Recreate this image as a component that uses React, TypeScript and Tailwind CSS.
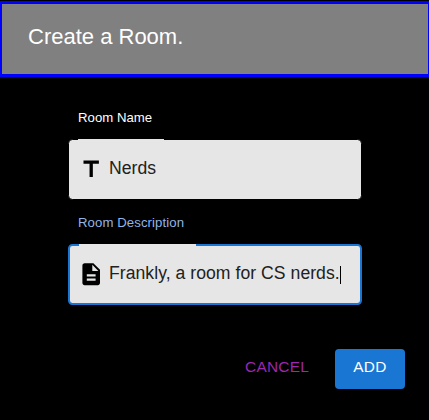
import type { ReactNode } from "react";

function Glyph({ d }: { d: string }) {
  return (
    <svg viewBox="0 0 24 24" className="size-[26.4px] shrink-0 fill-black">
      <path d={d} />
    </svg>
  );
}

const TITLE = "M5 4v3h5.5v12h3V7H19V4z";
const DESCRIPTION =
  "M14 2H6c-1.1 0-1.99.9-1.99 2L4 20c0 1.1.89 2 1.99 2H18c1.1 0 2-.9 2-2V8l-6-6zm2 16H8v-2h8v2zm0-4H8v-2h8v2zm-3-5V3.5L18.5 9H13z";

function Field({
  label,
  labelClass,
  boxClass,
  notchClass,
  children,
}: {
  label: string;
  labelClass: string;
  boxClass: string;
  notchClass: string;
  children: ReactNode;
}) {
  return (
    <div className="h-[105px]">
      <div className={`ml-[10px] h-[29px] text-[13.2px] leading-[16px] ${labelClass}`}>{label}</div>
      <div className={`relative flex h-[61px] w-[294px] items-center rounded-[4.4px] bg-[#e6e6e6] ${boxClass}`}>
        <span className={`absolute bg-[#e6e6e6] ${notchClass}`} />
        {children}
      </div>
    </div>
  );
}

export default function App() {
  return (
    <div className="h-[420px] w-[429px] overflow-hidden bg-black pt-px font-['Liberation_Sans',Arial,sans-serif]">
      <header className="h-[76px] border-y-[3px] border-r border-l-2 border-[#0000ff] bg-[#808080] pt-[17px] pl-[26px] text-[22px] leading-[32px] tracking-[0px] text-white">
        Create a Room.
      </header>
      <main className="pt-[33px] pl-[68px]">
        <Field
          label="Room Name"
          labelClass="text-white tracking-[0.02px]"
          boxClass="border border-black pl-[8.8px]"
          notchClass="left-[9px] -top-px h-px w-[86px]"
        >
          <Glyph d={TITLE} />
          <span className="ml-[4.8px] pb-[2px] text-[17.6px] tracking-[0.04px] text-[#212121]">Nerds</span>
        </Field>
        <Field
          label="Room Description"
          labelClass="text-[#90b5e8] tracking-[0.08px]"
          boxClass="border-2 border-[#1976d2] pl-[7.8px]"
          notchClass="left-[9px] -top-[2px] h-[2px] w-[117px]"
        >
          <Glyph d={DESCRIPTION} />
          <span className="ml-[4.8px] pb-[2px] text-[17.6px] tracking-[0.045px] text-[#212121]">Frankly, a room for CS nerds.</span>
          <span className="h-[18px] w-px bg-black" />
        </Field>
      </main>
      <footer className="mt-[29px] flex h-10 justify-end pr-6 text-[15.4px] leading-[36px] tracking-[0.3px]">
        <button className="mr-[25.8px] pb-1 text-[#9c27b0]">CANCEL</button>
        <button className="w-[70px] rounded-[4px] bg-[#1976d2] pb-1 text-white">ADD</button>
      </footer>
    </div>
  );
}
